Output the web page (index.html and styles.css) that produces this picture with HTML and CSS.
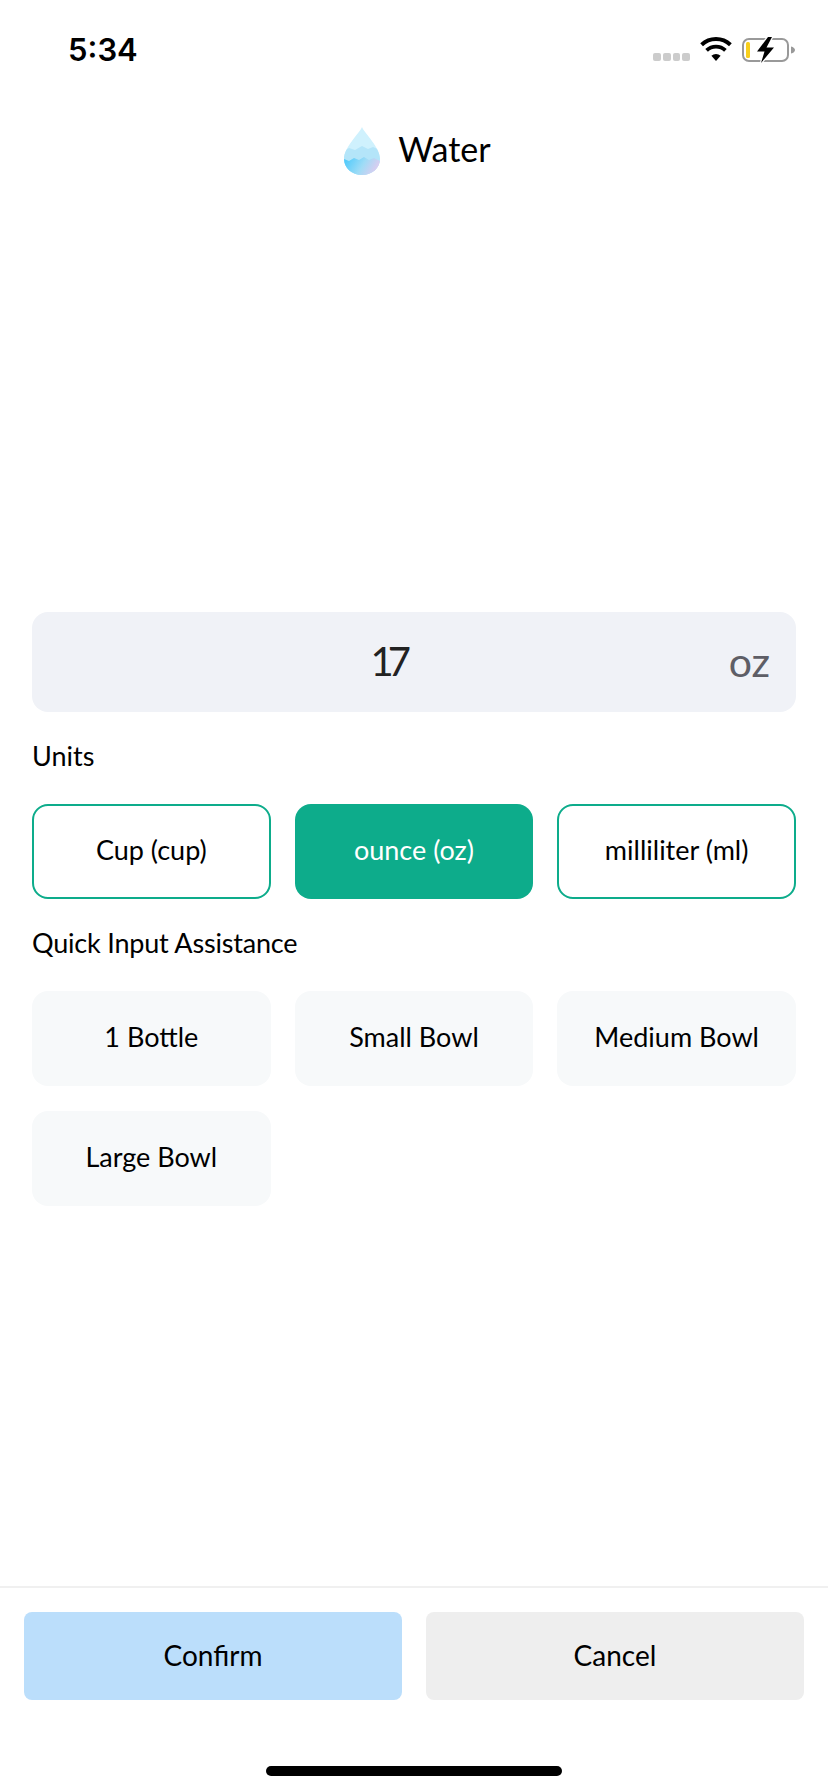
FILE: index.html
```html
<!DOCTYPE html>
<html lang="en">
<head>
<meta charset="utf-8">
<title>Water</title>
<link rel="stylesheet" href="styles.css">
</head>
<body>
<div class="page">
  <header class="status">
    <span class="time">5:34</span>
    <div class="status-icons">
      <div class="dots"><i></i><i></i><i></i><i></i></div>
      <svg class="wifi" viewBox="0 0 32 24" aria-hidden="true">
        <path d="M16 24l-4.600-5.200a6.600 6.600 0 0 1 9.200 0z" fill="#000"/>
        <path d="M6.600 13.400a13.600 13.600 0 0 1 18.800 0" fill="none" stroke="#000" stroke-width="3.800"/>
        <path d="M1.600 7.800a21 21 0 0 1 28.800 0" fill="none" stroke="#000" stroke-width="4"/>
      </svg>
      <svg class="battery" viewBox="0 0 53 26" aria-hidden="true">
        <rect x="1" y="2" width="45" height="22" rx="6" fill="none" stroke="#999" stroke-width="2"/>
        <rect x="4" y="5" width="4" height="16" rx="1.500" fill="#f8cf1c"/>
        <path d="M49 9.500c2.500.5 4 2 4 3.500s-1.500 3-4 3.500z" fill="#999"/>
        <path d="M26 0L15 14.500h7.500L19 26l13-15.500h-7.500L30 0z" fill="#000" stroke="#fff" stroke-width="2.500" paint-order="stroke"/>
      </svg>
    </div>
  </header>

  <div class="title">
    <svg class="drop" viewBox="0 0 36 48" aria-hidden="true">
      <defs>
        <clipPath id="dropClip"><path d="M18 0C15 7 0 20 0 32c0 9 8 16 18 16s18-7 18-16C36 20 21 7 18 0z"/></clipPath>
        <linearGradient id="lowWave" x1="0" y1="0" x2="1" y2="0.3">
          <stop offset="0" stop-color="#45c8fc"/>
          <stop offset="0.6" stop-color="#9fdcf6"/>
          <stop offset="1" stop-color="#d9cdf0"/>
        </linearGradient>
      </defs>
      <g clip-path="url(#dropClip)">
        <rect width="36" height="48" fill="#cff1fd"/>
        <path d="M0 24l5-3 6 2 7-4 6 3 5-2 7 3v25H0z" fill="#b4e5f9"/>
        <path d="M0 32l5 2 5-3 5 2 5-3 5 3 5-2 6 3v14H0z" fill="url(#lowWave)"/>
      </g>
    </svg>
    <span class="title-text">Water</span>
  </div>

  <main class="content">
    <div class="amount">
      <span class="amount-value">17</span>
      <span class="amount-unit">oz</span>
    </div>
    <div class="label label-units">Units</div>
    <div class="grid">
      <button class="chip chip-outline">Cup (cup)</button>
      <button class="chip chip-active">ounce (oz)</button>
      <button class="chip chip-outline">milliliter (ml)</button>
    </div>
    <div class="label label-quick">Quick Input Assistance</div>
    <div class="grid">
      <button class="chip chip-soft">1 Bottle</button>
      <button class="chip chip-soft">Small Bowl</button>
      <button class="chip chip-soft">Medium Bowl</button>
      <button class="chip chip-soft">Large Bowl</button>
    </div>
  </main>

  <footer class="footer">
    <div class="actions">
      <button class="action action-confirm">Confirm</button>
      <button class="action action-cancel">Cancel</button>
    </div>
    <div class="home-bar"></div>
  </footer>
</div>
</body>
</html>
```
FILE: styles.css
```css
* { box-sizing: border-box; }
html, body { margin: 0; padding: 0; background: #fff; }
body { font-family: "Lato", "Open Sans", sans-serif; color: #000; }
button { font: inherit; color: inherit; border: 0; padding: 0; margin: 0; }

.page { width: 828px; height: 1792px; display: flex; flex-direction: column; overflow: hidden; }

.status { height: 88px; flex: none; display: flex; justify-content: space-between; padding: 32px 33px 0 68px; }
.time { font-family: "Inter", sans-serif; font-weight: 600; font-size: 31px; line-height: 36px; }
.status-icons { display: flex; align-items: flex-start; height: 32px; padding-top: 5px; }
.dots { display: flex; gap: 2px; margin-top: 16px; margin-right: 10px; }
.dots i { display: block; width: 7.75px; height: 8px; border-radius: 2px; background: #ccc; }
.wifi { width: 32px; height: 24px; margin-right: 10px; }
.battery { width: 53px; height: 26px; }

.title { flex: none; height: 88px; display: flex; justify-content: center; align-items: flex-start; padding: 39px 0 0 7px; gap: 18px; }
.drop { width: 36px; height: 48px; flex: none; }
.title-text { font-size: 34px; line-height: 42px; margin-top: 1px; }

.content { flex: 1; padding: 436px 32px 0; }

.amount { height: 100px; border-radius: 16px; background: #f0f2f7; display: flex; align-items: center; padding: 0 26px 0 24px; }
.amount-value { flex: 1; text-align: center; font-size: 40px; line-height: 48px; color: #222; letter-spacing: -6px; margin-top: -3px; }
.amount-unit { font-size: 41px; line-height: 48px; color: #5e5e66; margin-left: 9px; }

.label { font-size: 27px; line-height: 36px; }
.label-units { margin-top: 26px; margin-bottom: 30px; }
.label-quick { margin-top: 26px; margin-bottom: 30px; letter-spacing: -0.2px; }

.grid { display: grid; grid-template-columns: repeat(3, 1fr); gap: 25px 24px; }
.chip { height: 95px; border-radius: 16px; font-size: 27px; display: flex; align-items: center; justify-content: center; padding-bottom: 4px; background: transparent; }
.chip-outline { border: 2px solid #0dac8b; background: #fff; }
.chip-active { background: #0dac8b; color: #fff; }
.chip-soft { background: #f7f9fa; }

.footer { flex: none; border-top: 2px solid #f0f0f0; padding-top: 24px; height: 206px; display: flex; flex-direction: column; align-items: center; }
.actions { width: 100%; padding: 0 24px; display: flex; gap: 24px; }
.action { flex: 1; height: 88px; border-radius: 8px; font-size: 28px; display: flex; align-items: center; justify-content: center; padding-bottom: 2px; }
.action-confirm { background: #bbdefb; }
.action-cancel { background: #eeeeee; }
.home-bar { width: 296px; height: 10px; border-radius: 5px; background: #000; margin-top: 66px; }
```
